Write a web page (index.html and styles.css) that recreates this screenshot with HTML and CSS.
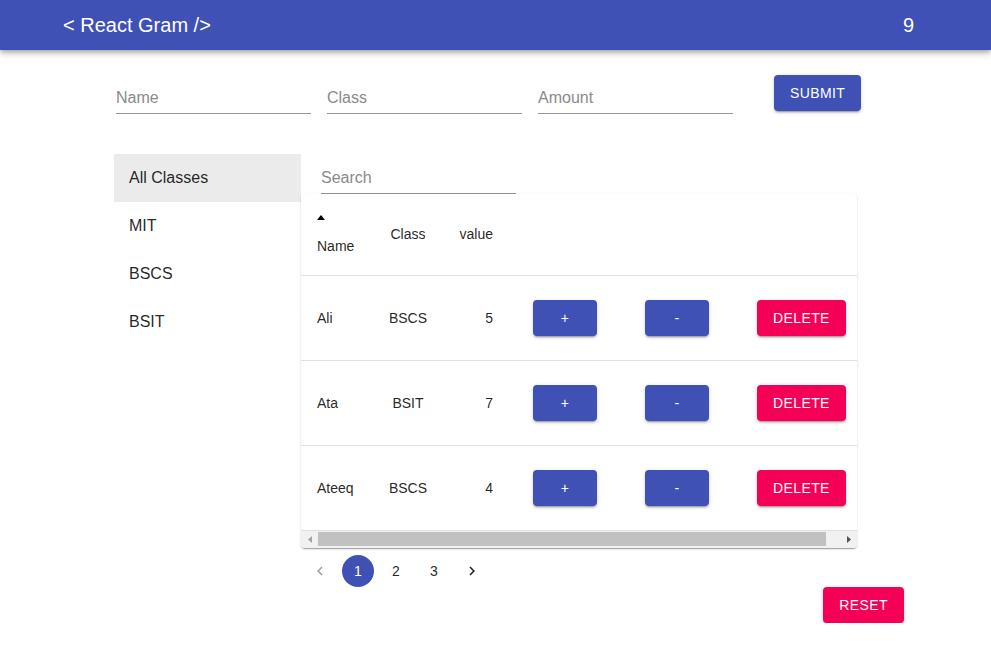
FILE: index.html
```html
<!DOCTYPE html>
<html>
<head>
<meta charset="utf-8">
<link rel="stylesheet" href="styles.css">
</head>
<body>
<header class="appbar">
  <div class="brand">&lt; React Gram /&gt;</div>
  <div class="count">9</div>
</header>
<main class="main">
  <form class="entry">
    <div class="field"><input class="input" placeholder="Name"></div>
    <div class="field"><input class="input" placeholder="Class"></div>
    <div class="field"><input class="input" placeholder="Amount"></div>
    <button type="button" class="btn primary submit">Submit</button>
  </form>
  <section class="content">
    <nav class="classes">
      <div class="cls active">All Classes</div>
      <div class="cls">MIT</div>
      <div class="cls">BSCS</div>
      <div class="cls">BSIT</div>
    </nav>
    <div class="right">
      <div class="search"><input class="input" placeholder="Search"></div>
      <div class="paper">
        <div class="viewport">
          <table class="table">
            <colgroup>
              <col class="c-name"><col class="c-class"><col class="c-value"><col class="c-plus"><col class="c-minus"><col class="c-del">
            </colgroup>
            <thead>
              <tr>
                <th class="left sortcell"><div class="sort"><svg class="arrow" viewBox="0 0 8 5" width="8" height="5"><path d="M0 5 L4 0 L8 5 Z" fill="#000"/></svg><span>Name</span></div></th>
                <th class="center">Class</th>
                <th class="rightal">value</th>
                <th></th><th></th><th></th>
              </tr>
            </thead>
            <tbody>
              <tr>
                <td class="left">Ali</td><td class="center">BSCS</td><td class="rightal">5</td>
                <td class="center"><button class="btn primary small">+</button></td>
                <td class="center"><button class="btn primary small">-</button></td>
                <td class="del"><button class="btn secondary">Delete</button></td>
              </tr>
              <tr>
                <td class="left">Ata</td><td class="center">BSIT</td><td class="rightal">7</td>
                <td class="center"><button class="btn primary small">+</button></td>
                <td class="center"><button class="btn primary small">-</button></td>
                <td class="del"><button class="btn secondary">Delete</button></td>
              </tr>
              <tr>
                <td class="left">Ateeq</td><td class="center">BSCS</td><td class="rightal">4</td>
                <td class="center"><button class="btn primary small">+</button></td>
                <td class="center"><button class="btn primary small">-</button></td>
                <td class="del"><button class="btn secondary">Delete</button></td>
              </tr>
            </tbody>
          </table>
        </div>
        <div class="hscroll">
          <span class="sb-btn"><svg viewBox="0 0 4 7" width="4" height="7"><path d="M4 0 L0 3.5 L4 7 Z" fill="#a3a3a3"/></svg></span>
          <span class="sb-thumb"></span>
          <span class="sb-space"></span>
          <span class="sb-btn"><svg viewBox="0 0 4 7" width="4" height="7"><path d="M0 0 L4 3.5 L0 7 Z" fill="#505050"/></svg></span>
        </div>
      </div>
      <div class="pager">
        <span class="pg disabled"><svg viewBox="0 0 24 24" width="18" height="18"><path d="M15.41 7.41L14 6l-6 6 6 6 1.41-1.41L10.83 12z" fill="currentColor"/></svg></span>
        <span class="pg current">1</span>
        <span class="pg">2</span>
        <span class="pg">3</span>
        <span class="pg"><svg viewBox="0 0 24 24" width="18" height="18"><path d="M10 6L8.59 7.41 13.17 12l-4.58 4.59L10 18l6-6z" fill="currentColor"/></svg></span>
      </div>
    </div>
  </section>
  <div class="resetrow"><button class="btn secondary reset">Reset</button></div>
</main>
</body>
</html>
```
FILE: styles.css
```css
* { box-sizing: border-box; }
body {
  margin: 0;
  font-family: "Liberation Sans", Arial, sans-serif;
  color: rgba(0,0,0,0.87);
  background: #fff;
}
.appbar {
  height: 50px;
  background: #3f51b5;
  color: #fff;
  display: flex;
  align-items: center;
  justify-content: space-between;
  padding: 1px 77px 0 63px;
  box-shadow: 0 2px 4px -1px rgba(0,0,0,.2), 0 4px 5px 0 rgba(0,0,0,.14), 0 1px 10px 0 rgba(0,0,0,.12);
  font-size: 20px;
}
.main {
  width: 790px;
  margin-left: 114px;
}
.entry {
  display: flex;
  align-items: flex-start;
  padding-left: 2px;
  margin: 0;
  padding-top: 25px;
}
.field { width: 195px; margin-right: 16px; padding-top: 6px; }
.field:nth-child(3) { margin-right: 41px; }
.input {
  display: block;
  width: 100%;
  border: 0;
  border-bottom: 1px solid #949494;
  font-family: inherit;
  font-size: 16px;
  padding: 7px 0 6px;
  height: 33px;
  outline: none;
  background: transparent;
  color: rgba(0,0,0,0.87);
}
.input::placeholder { color: #8a8a8a; }
.btn {
  font-family: inherit;
  font-size: 14px;
  text-transform: uppercase;
  letter-spacing: 0.02857em;
  border: 0;
  border-radius: 4px;
  color: #fff;
  height: 36px;
  padding: 0 16px;
  box-shadow: 0 3px 1px -2px rgba(0,0,0,.2), 0 2px 2px 0 rgba(0,0,0,.14), 0 1px 5px 0 rgba(0,0,0,.12);
  cursor: pointer;
}
.primary { background: #3f51b5; }
.secondary { background: #f50057; }
.submit { width: 87px; }
.small { width: 64px; }
.content {
  display: flex;
  margin-top: 40px;
}
.classes { width: 187px; }
.cls {
  height: 48px;
  display: flex;
  align-items: center;
  padding-left: 15px;
  font-size: 16px;
}
.cls.active { background: #ebebeb; }
.right { width: 556px; }
.search { width: 195px; margin-left: 20px; margin-top: 7px; }
.paper {
  background: #fff;
  border-radius: 4px;
  box-shadow: 0 2px 1px -1px rgba(0,0,0,.2), 0 1px 1px 0 rgba(0,0,0,.14), 0 1px 3px 0 rgba(0,0,0,.12);
  overflow: hidden;
}
.viewport { overflow: hidden; }
.table {
  border-collapse: collapse;
  table-layout: fixed;
  width: 583px;
  font-size: 14px;
}
.c-name { width: 73px; }
.c-class { width: 68px; }
.c-value { width: 67px; }
.c-plus { width: 112px; }
.c-minus { width: 112px; }
.c-del { width: 151px; }
th, td {
  border-bottom: 1px solid #e0e0e0;
  padding: 0;
  font-weight: normal;
  color: rgba(0,0,0,0.87);
}
thead tr { height: 81px; }
tbody tr { height: 85px; }
.left { text-align: left; padding-left: 16px; }
.center { text-align: center; }
.rightal { text-align: right; padding-right: 16px; }
.del { text-align: left; padding-left: 24px; }
.sortcell { vertical-align: top; padding-top: 21px; }
.sort { display: flex; flex-direction: column; align-items: flex-start; }
.arrow { display: block; margin: 0 0 18px 0; }
.hscroll {
  display: flex;
  align-items: center;
  height: 17px;
  background: #f1f1f1;
}
.sb-btn {
  width: 17px;
  height: 17px;
  display: flex;
  align-items: center;
  justify-content: center;
}
.sb-thumb {
  width: 508px;
  height: 14px;
  background: #c1c1c1;
}
.sb-space { flex: 1; }
.pager {
  display: flex;
  align-items: center;
  margin-top: 7px;
  padding-left: 3px;
}
.pg {
  width: 32px;
  height: 32px;
  margin-right: 6px;
  border-radius: 16px;
  display: flex;
  align-items: center;
  justify-content: center;
  font-size: 14px;
  color: rgba(0,0,0,0.87);
}
.pg.current { background: #3f51b5; color: #fff; }
.pg.disabled { color: rgba(0,0,0,0.38); }
.resetrow { display: flex; justify-content: flex-end; }
.reset { width: 81px; }
```
